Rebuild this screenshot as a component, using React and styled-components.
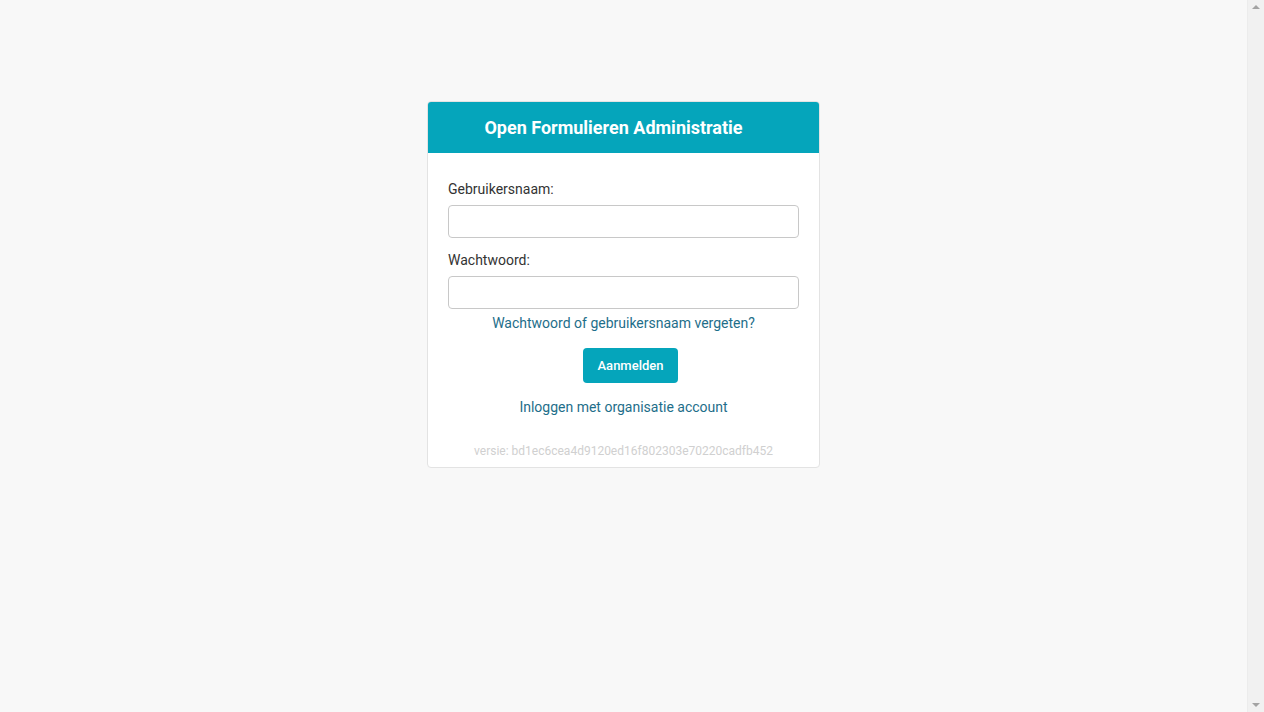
import React from "react";
import styled, { createGlobalStyle } from "styled-components";

const Global = createGlobalStyle`
  html { background: #f8f8f8; }
  body {
    margin: 0;
    background: #f8f8f8;
    font-family: Roboto, "Noto Sans", Arial, sans-serif;
    color: #333;
  }
  * { box-sizing: border-box; }
`;

const Page = styled.div`
  display: flex;
  justify-content: center;
  align-items: flex-start;
  padding-top: 101px;
  padding-right: 17px;
  min-height: 600px;
`;

/* Browser scrollbar gutter overlaid on the viewport's right edge */
const ScrollGutter = styled.div`
  position: fixed;
  top: 0;
  right: 0;
  width: 17px;
  height: 100vh;
  background: #f1f1f1;
  border-left: 1px solid #ececec;
  display: flex;
  flex-direction: column;
  justify-content: space-between;
  align-items: center;
  padding: 5px 0;
`;

const Arrow = styled.span`
  width: 0;
  height: 0;
  border-left: 4px solid transparent;
  border-right: 4px solid transparent;
  ${(p) =>
    p.$down
      ? "border-top: 4px solid #a3a3a3;"
      : "border-bottom: 4px solid #a3a3a3;"}
`;

const Card = styled.div`
  width: 393px;
  background: #fff;
  border: 1px solid #e3e3e3;
  border-radius: 4px;
  overflow: hidden;
`;

const Header = styled.div`
  background: #05a5bb;
  height: 52px;
  margin: -1px -1px 0;
  display: flex;
  align-items: center;
  justify-content: center;
  padding-right: 20px;
  color: #fff;
  font-size: 18px;
  font-weight: 700;
`;

const Body = styled.form`
  padding: 26px 20px 8px;
  display: flex;
  flex-direction: column;
`;

const Label = styled.label`
  font-size: 14px;
  line-height: 20px;
  color: #333;
  margin-bottom: 6px;
`;

const Input = styled.input`
  height: 33px;
  width: 100%;
  border: 1px solid #c8c8c8;
  border-radius: 4px;
  background: #fff;
  margin-bottom: ${(p) => p.$mb || 0}px;
  font: inherit;
  padding: 0 8px;
  outline: none;
`;

const LinkText = styled.a`
  display: block;
  text-align: center;
  color: #1e6e8a;
  font-size: 14px;
  line-height: 20px;
  text-decoration: none;
  margin-top: ${(p) => p.$mt || 0}px;
`;

const ButtonRow = styled.div`
  display: flex;
  justify-content: center;
  margin-top: 15px;
  padding-left: 14px;
`;

const Button = styled.button`
  width: 95px;
  height: 35px;
  border: none;
  border-radius: 4px;
  background: #05a5bb;
  color: #fff;
  font-family: Roboto, Arial, sans-serif;
  font-size: 13px;
  font-weight: 500;
  cursor: pointer;
`;

const Version = styled.div`
  text-align: center;
  color: #d0d0d0;
  font-size: 12px;
  line-height: 16px;
  margin-top: 26px;
`;

export default function App() {
  return (
    <>
      <Global />
      <Page>
        <Card>
          <Header>Open Formulieren Administratie</Header>
          <Body onSubmit={(e) => e.preventDefault()}>
            <Label htmlFor="u">Gebruikersnaam:</Label>
            <Input id="u" type="text" $mb={12} />
            <Label htmlFor="p">Wachtwoord:</Label>
            <Input id="p" type="password" />
            <LinkText href="#" $mt={4}>Wachtwoord of gebruikersnaam vergeten?</LinkText>
            <ButtonRow>
              <Button type="submit">Aanmelden</Button>
            </ButtonRow>
            <LinkText href="#" $mt={14}>Inloggen met organisatie account</LinkText>
            <Version>versie: bd1ec6cea4d9120ed16f802303e70220cadfb452</Version>
          </Body>
        </Card>
      </Page>
      <ScrollGutter aria-hidden="true">
        <Arrow />
        <Arrow $down />
      </ScrollGutter>
    </>
  );
}
